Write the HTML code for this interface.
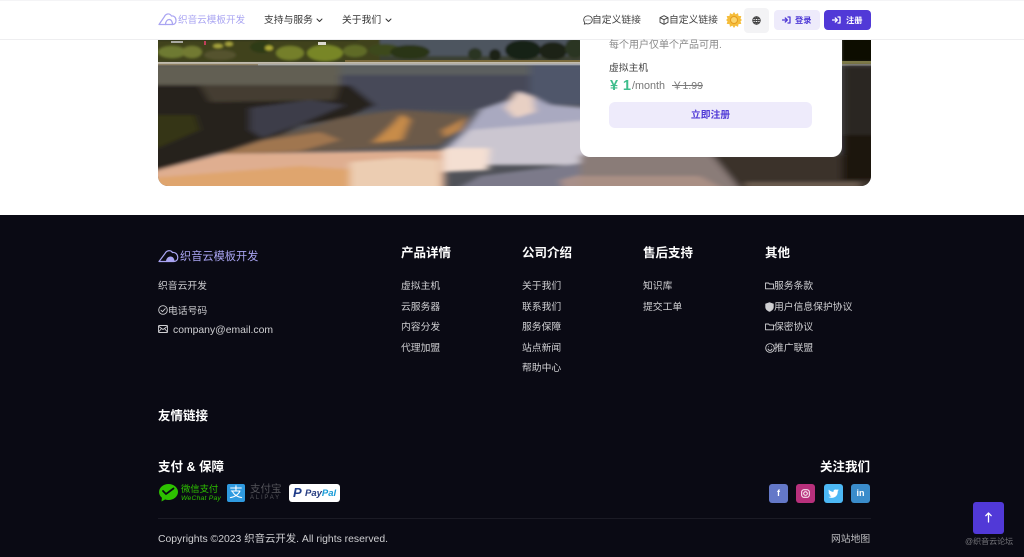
<!DOCTYPE html>
<html lang="zh"><head><meta charset="utf-8"><title>织音云模板开发</title>
<style>
html,body{margin:0;padding:0;background:#fff}
body{width:1024px;height:557px;overflow:hidden;position:relative;font-family:"Liberation Sans","Noto Sans CJK SC",sans-serif;font-size:9.8px;color:#333}
.a{position:absolute;white-space:nowrap;line-height:14px}
svg.i{position:absolute;fill:none;stroke:currentColor;stroke-width:1.4;stroke-linecap:round;stroke-linejoin:round}
#foot{position:absolute;left:0;top:215px;width:1024px;height:342px;background:#0a0a14}
.f{color:#cfcfd2}
.h{color:#fff;font-weight:700;font-size:12.5px;line-height:16px}
.soc{position:absolute;top:484px;width:19px;height:19px;border-radius:3px;color:#fff;text-align:center;font:700 9px/19px "Liberation Sans",sans-serif}
</style></head><body>

<svg class="a" style="left:0;top:0" width="1024" height="215" viewBox="0 0 1024 215">
<defs>
<clipPath id="c"><path d="M158 40H871V176a10 10 0 0 1-10 10H168a10 10 0 0 1-10-10Z"/></clipPath>
<filter id="b1" x="-5%" y="-20%" width="110%" height="140%"><feGaussianBlur stdDeviation="1.300"/></filter>
<filter id="b3" x="-5%" y="-10%" width="110%" height="120%"><feGaussianBlur stdDeviation="4 1.500"/></filter>
</defs>
<g clip-path="url(#c)">
<rect x="158" y="40" width="713" height="146" fill="#4f5158"/>
<g filter="url(#b1)">
<rect x="150" y="36" width="290" height="27" fill="#40431f"/>
<rect x="380" y="36" width="210" height="21" fill="#4e545e"/>
<rect x="380" y="56" width="210" height="6" fill="#3a3f30"/>
<ellipse cx="172" cy="52" rx="14" ry="6" fill="#6e7a30"/>
<ellipse cx="192" cy="52" rx="10" ry="6" fill="#727a32"/>
<ellipse cx="220" cy="55" rx="16" ry="5" fill="#54522e"/>
<ellipse cx="218" cy="46" rx="5" ry="2" fill="#a9a63c"/>
<ellipse cx="229" cy="44" rx="4" ry="2" fill="#a9a63c"/>
<ellipse cx="262" cy="47" rx="12" ry="6" fill="#2e3a18"/>
<ellipse cx="269" cy="48" rx="4" ry="2.500" fill="#b0ac38"/>
<ellipse cx="290" cy="53" rx="14" ry="7" fill="#747f2a"/>
<ellipse cx="325" cy="53" rx="18" ry="8" fill="#788628"/>
<ellipse cx="355" cy="51" rx="12" ry="6" fill="#5e6b28"/>
<ellipse cx="385" cy="50" rx="16" ry="6" fill="#3c4a1e"/>
<ellipse cx="410" cy="52" rx="20" ry="7" fill="#2c3418"/>
<ellipse cx="475" cy="54" rx="7" ry="6" fill="#2c3524"/>
<ellipse cx="495" cy="55" rx="6" ry="6" fill="#1c2418"/>
<ellipse cx="523" cy="50" rx="18" ry="10" fill="#192016"/>
<ellipse cx="553" cy="51" rx="14" ry="9" fill="#1c2418"/>
<ellipse cx="575" cy="48" rx="10" ry="10" fill="#2a3422"/>
<rect x="158" y="36" width="200" height="4" fill="#1e2418"/>
<rect x="842" y="36" width="32" height="26" fill="#0e0b06"/>
</g>
<rect x="171" y="41" width="12" height="2" fill="#a8a8a0"/><rect x="204" y="41" width="2" height="4" fill="#c0405a"/><rect x="318" y="42" width="8" height="3" fill="#dddad0"/>
<rect x="345" y="60" width="235" height="2" fill="#7a6a3c"/>
<rect x="158" y="62" width="422" height="2" fill="#c9c2b3"/>
<rect x="158" y="64" width="100" height="1.500" fill="#a8946e"/>
<rect x="258" y="64" width="322" height="1.500" fill="#d8d8d8"/>
<rect x="842" y="61" width="29" height="3" fill="#7d7a48"/>
<rect x="842" y="64" width="29" height="2" fill="#8a8a84"/>
<g filter="url(#b3)">
<rect x="150" y="65" width="200" height="24" fill="#625f52"/>
<rect x="340" y="65" width="190" height="14" fill="#5c5e5e"/>
<rect x="340" y="75" width="190" height="35" fill="#474a58"/>
<rect x="530" y="65" width="60" height="40" fill="#50566a"/>
<path d="M150 85H350L375 105 345 118 300 125 262 145 220 152 158 170 150 170Z" fill="#26241f"/>
<path d="M200 85H340L335 100 210 102Z" fill="#453d32"/>
<path d="M150 115H195L200 130 158 148H150Z" fill="#363618"/>
<path d="M250 108 310 100 345 105 300 124 262 138 250 130Z" fill="#3c3e48"/>
<path d="M215 155 260 140 300 130 340 118 400 110 470 115 458 128 440 145 300 152Z" fill="#6c5a48"/>
<path d="M222 154 262 141 320 132 340 140 300 151Z" fill="#a07650"/>
<path d="M372 143 392 125 402 114 410 120 402 140Z" fill="#c88c48"/>
<path d="M442 130 468 117 462 130 445 138Z" fill="#bb844c"/>
<path d="M443 150 465 130 480 110 510 100 518 91 532 96 550 105 590 108V160H443Z" fill="#a9a9c0"/>
<path d="M505 108 517 92 533 97 535 112 515 118Z" fill="#e8d0c4"/>
<path d="M450 150 470 130 590 120V165H450Z" fill="#cbc6d0"/>
<path d="M150 172 220 154 445 150V195H150Z" fill="#dfae90"/>
<path d="M150 178 300 166 360 170 370 195H150Z" fill="#dfa56e"/>
<path d="M350 162 400 158 440 160 440 195H350Z" fill="#eccdb2"/>
<path d="M443 148 490 148 488 170 443 172Z" fill="#f4dfd2"/>
<path d="M445 195 480 176 590 162V195Z" fill="#7c7a8a"/>
<path d="M560 180 590 172V195H565Z" fill="#a8908a"/>
<path d="M580 155 712 155 745 195H580Z" fill="#8a7b78"/>
<path d="M580 176 700 176 735 195H580Z" fill="#a98f84"/>
<path d="M712 155H880V195H745Z" fill="#3a3229"/>
<rect x="745" y="182" width="115" height="6" fill="#6a5c50"/>
<rect x="842" y="66" width="40" height="75" fill="#2a2722"/>
<rect x="842" y="135" width="40" height="45" fill="#1a1610"/>
</g>
</g>
<rect x="580" y="30" width="262" height="127" rx="10" fill="#fff"/>
</svg>

<div class="a" style="left:0;top:0;width:1024px;height:40px;background:#fff;border-bottom:1px solid #eeeef0;box-sizing:border-box;border-top:1px solid #f4f4f6"></div>

<svg class="i" style="left:158px;top:12px;color:#a9a4f2;stroke-width:1.200" width="19" height="14" viewBox="0 0 19 14"><path d="M1 12.500 6.500 4.500C7.500 2 11.500 .5 13.500 4 16 3.500 18 5.500 18 8.500 18 11 16.500 12.500 14.500 12.500Z"/><path d="M7.500 12.500c0-3 1.800-5 3.700-5s3.300 2 3.300 5"/></svg>
<div class="a" style="left:178px;top:14px;color:#a9a4f2;font-size:9.600px">织音云模板开发</div>
<div class="a" style="left:264px;top:14px;color:#333">支持与服务</div>
<svg class="i" style="left:316px;top:18px;color:#333;stroke-width:1" width="7" height="5" viewBox="0 0 7 5"><path d="M1 1 3.500 3.500 6 1"/></svg>
<div class="a" style="left:342px;top:14px;color:#333">关于我们</div>
<svg class="i" style="left:385px;top:18px;color:#333;stroke-width:1" width="7" height="5" viewBox="0 0 7 5"><path d="M1 1 3.500 3.500 6 1"/></svg>

<svg class="i" style="left:583px;top:15px;color:#444;stroke-width:.9" width="10" height="10" viewBox="0 0 10 10"><path d="M5 .8C2.500.8.700 2.600.700 4.800c0 1 .4 1.900 1 2.600L1.300 9.200l2-.6c.5.2 1.100.3 1.700.3 2.500 0 4.300-1.800 4.300-4.100S7.500.8 5 .8Z"/><path d="M3 5h.1M5 5h.1M7 5h.1"/></svg>
<div class="a" style="left:592px;top:14px;color:#444">自定义链接</div>
<svg class="i" style="left:659px;top:15px;color:#444;stroke-width:.9" width="10" height="10" viewBox="0 0 10 10"><path d="M5 .7 9 2.700V7.300L5 9.300 1 7.300V2.700ZM1 2.700 5 4.700 9 2.700M5 4.700V9.300"/></svg>
<div class="a" style="left:669px;top:14px;color:#444">自定义链接</div>

<svg class="i" style="left:726px;top:12px;stroke:none" width="16" height="16" viewBox="0 0 16 16"><path fill="#f5bd3a" d="M8 0l1.600 2.400L12 1.100l.5 2.800 2.800.2-.8 2.700L16 8l-1.500 1.200.8 2.700-2.800.2-.5 2.800-2.400-1.300L8 16l-1.600-2.400L4 14.900l-.5-2.800-2.800-.2.800-2.700L0 8l1.500-1.200-.8-2.700 2.800-.2L4 1.100l2.400 1.300Z"/><circle cx="8" cy="8" r="3.500" fill="#fbd56c" stroke="#e59b1f" stroke-width="1"/></svg>
<div class="a" style="left:744px;top:8px;width:25px;height:25px;background:#f3f3f5;border-radius:4px"></div>
<svg class="i" style="left:752px;top:16px;color:#444;stroke-width:1" width="9" height="9" viewBox="0 0 9 9"><circle cx="4.500" cy="4.500" r="3.700"/><path d="M.8 4.500h7.400M1.500 2.500h6M1.500 6.500h6M4.500.8c-2 2.200-2 5.200 0 7.400M4.500.8c2 2.200 2 5.200 0 7.400"/></svg>

<div class="a" style="left:774px;top:10px;width:46px;height:20px;background:#eeebfb;border-radius:4px"></div>
<svg class="i" style="left:782px;top:16px;color:#4f39d6;stroke-width:1.300" width="9" height="8" viewBox="0 0 9 8"><path d="M.5 4h4.500M3.300 2 5.300 4 3.300 6M6 1h2v6H6" /></svg>
<div class="a" style="left:795px;top:14px;color:#4f39d6;font-size:8.200px;font-weight:700">登录</div>
<div class="a" style="left:824px;top:10px;width:47px;height:20px;background:#5139d7;border-radius:4px"></div>
<svg class="i" style="left:832px;top:16px;color:#fff;stroke-width:1.300" width="9" height="8" viewBox="0 0 9 8"><path d="M.5 4h4.500M3.300 2 5.300 4 3.300 6M6 1h2v6H6"/></svg>
<div class="a" style="left:846px;top:14px;color:#fff;font-size:8.200px;font-weight:700">注册</div>

<div class="a" style="left:609px;top:39px;color:#888;font-size:10px">每个用户仅单个产品可用.</div>
<div class="a" style="left:609px;top:62px;color:#444">虚拟主机</div>
<div class="a" style="left:610px;top:78px;color:#3ebd8c;font-size:14.500px;font-weight:700;line-height:16px;letter-spacing:.4px">¥ 1</div>
<div class="a" style="left:632px;top:79px;color:#777;font-size:10.800px">/month</div>
<div class="a" style="left:672px;top:79px;color:#777;font-size:10.500px;text-decoration:line-through">￥1.99</div>
<div class="a" style="left:609px;top:102px;width:203px;height:26px;background:#eeebfb;border-radius:6px;text-align:center;line-height:27px;color:#4f39d6;font-weight:700;">立即注册</div>

<div id="foot"></div>
<svg class="i" style="left:158px;top:249px;color:#a9a4f2;stroke-width:1.200" width="21" height="14" viewBox="0 0 21 14"><path d="M1 12.500 7 4.500C8.500 1.500 12.500 .5 14.500 3.500 17.500 3 19.800 5.500 19.800 8.500 19.800 11 18 12.500 16 12.500Z"/><path fill="#a9a4f2" stroke="none" d="M8 12.500c0-3 2.200-5 4.500-5s4 2 4 5Z"/></svg>
<div class="a" style="left:180px;top:250px;color:#a9a4f2;font-size:11.200px">织音云模板开发</div>
<div class="a f" style="left:158px;top:280px">织音云开发</div>
<svg class="i" style="left:158px;top:305px;color:#cfcfd2;stroke-width:.9" width="10" height="10" viewBox="0 0 10 10"><circle cx="5" cy="5" r="4.300"/><path d="M3 5.200 4.500 6.700 7.200 3.700"/></svg>
<div class="a f" style="left:168px;top:305px">电话号码</div>
<svg class="i" style="left:158px;top:325px;color:#cfcfd2;stroke-width:.9" width="10" height="8" viewBox="0 0 10 8"><rect x=".5" y=".5" width="9" height="7" rx=".8"/><path d="M.5 1.200 5 4.500 9.500 1.200M.5 7 3.500 3.500M9.500 7 6.500 3.500"/></svg>
<div class="a f" style="left:173px;top:324px;font-size:10.400px">company@email.com</div>

<div class="a h" style="left:401px;top:245px">产品详情</div>
<div class="a f" style="left:401px;top:280px">虚拟主机</div>
<div class="a f" style="left:401px;top:301px">云服务器</div>
<div class="a f" style="left:401px;top:321px">内容分发</div>
<div class="a f" style="left:401px;top:342px">代理加盟</div>

<div class="a h" style="left:522px;top:245px">公司介绍</div>
<div class="a f" style="left:522px;top:280px">关于我们</div>
<div class="a f" style="left:522px;top:301px">联系我们</div>
<div class="a f" style="left:522px;top:321px">服务保障</div>
<div class="a f" style="left:522px;top:342px">站点新闻</div>
<div class="a f" style="left:522px;top:362px">帮助中心</div>

<div class="a h" style="left:643px;top:245px">售后支持</div>
<div class="a f" style="left:643px;top:280px">知识库</div>
<div class="a f" style="left:643px;top:301px">提交工单</div>

<div class="a h" style="left:765px;top:245px">其他</div>
<svg class="i" style="left:765px;top:282px;color:#cfcfd2;stroke-width:.9" width="9" height="8" viewBox="0 0 9 8"><path d="M.5 6.800V1h3l1 1h4v4.800Z"/></svg>
<div class="a f" style="left:774px;top:280px">服务条款</div>
<svg class="i" style="left:765px;top:302px;stroke:none" width="9" height="10" viewBox="0 0 9 10"><path fill="#cfcfd2" d="M4.500.3 8.700 1.800V5c0 2.300-2 4-4.200 4.800C2.300 9 .3 7.300.3 5V1.800Z"/></svg>
<div class="a f" style="left:774px;top:301px">用户信息保护协议</div>
<svg class="i" style="left:765px;top:323px;color:#cfcfd2;stroke-width:.9" width="9" height="8" viewBox="0 0 9 8"><path d="M.5 6.800V1h3l1 1h4v4.800Z"/></svg>
<div class="a f" style="left:774px;top:321px">保密协议</div>
<svg class="i" style="left:765px;top:343px;color:#cfcfd2;stroke-width:.9" width="10" height="10" viewBox="0 0 10 10"><circle cx="5" cy="5" r="4.300"/><path d="M3 6c.5 1 1.200 1.400 2 1.400S6.500 7 7 6M3.500 3.800h.1M6.500 3.800h.1"/></svg>
<div class="a f" style="left:774px;top:342px">推广联盟</div>

<div class="a h" style="left:158px;top:408px">友情链接</div>
<div class="a h" style="left:158px;top:459px">支付 &amp; 保障</div>
<div class="a h" style="left:820px;top:459px">关注我们</div>

<svg class="i" style="left:158px;top:483px;stroke:none" width="20" height="19" viewBox="0 0 20 19"><ellipse cx="10.500" cy="9" rx="9.500" ry="8" fill="#2dc100"/><path fill="#2dc100" d="M4 14 3.500 18.500 8 16Z"/><path fill="none" stroke="#0a0a14" stroke-width="1.800" stroke-linecap="round" stroke-linejoin="round" d="M5 8 8 11 15.500 5.500"/></svg>
<div class="a" style="left:181px;top:484px;color:#2dc100;font-size:9.300px;line-height:11px">微信支付</div>
<div class="a" style="left:181px;top:495px;color:#2dc100;font-size:6.800px;font-style:italic;line-height:8px;letter-spacing:.2px">WeChat Pay</div>

<div class="a" style="left:227px;top:484px;width:18px;height:18px;background:#2f9ae0;border-radius:2px;color:#fff;font-size:13.500px;line-height:18px;text-align:center">支</div>
<div class="a" style="left:250px;top:483px;color:#54545a;font-size:10.500px;line-height:12px;">支付宝</div>
<div class="a" style="left:250px;top:495px;color:#54545a;font-size:6px;line-height:7px;letter-spacing:1.800px">ALIPAY</div>

<div class="a" style="left:289px;top:484px;width:51px;height:18px;background:#fff;border-radius:3px"></div>
<div class="a" style="left:293px;top:485px;color:#1f3c88;font:italic 700 13px/16px 'Liberation Sans',sans-serif">P</div>
<div class="a" style="left:305px;top:486px;font:italic 700 9.500px/15px 'Liberation Sans',sans-serif;color:#253b80">Pay<span style="color:#179bd7">Pal</span></div>

<div class="soc" style="left:769px;background:#6478c8">f</div>
<div class="soc" style="left:796px;background:#b8307c"><svg style="position:absolute;left:5px;top:5px" width="9" height="9" viewBox="0 0 9 9" fill="none" stroke="#fff"><rect x=".7" y=".7" width="7.600" height="7.600" rx="2.200"/><circle cx="4.500" cy="4.500" r="1.800"/></svg></div>
<div class="soc" style="left:824px;background:#4cb8f5"><svg style="position:absolute;left:4px;top:5px" width="11" height="9" viewBox="0 0 11 9"><path fill="#fff" d="M10.800 1.200c-.4.200-.8.300-1.200.3.400-.3.800-.7.900-1.200-.4.200-.9.400-1.300.5C7.900.2 6.200.3 5.600 1.700c-.2.400-.2.900-.1 1.300C3.700 2.900 2 2 .9.600.3 1.600.6 2.900 1.600 3.600 1.200 3.600.900 3.500.5 3.300.5 4.400 1.300 5.300 2.300 5.500c-.3.100-.7.100-1 0 .3.900 1.100 1.500 2.100 1.500C2.500 7.700 1.300 8 .2 7.900c3.900 2.300 9.800.3 9.500-5.500.4-.3.800-.7 1.100-1.200Z"/></svg></div>
<div class="soc" style="left:851px;background:#3a8ccb">in</div>

<div class="a" style="left:158px;top:518px;width:713px;height:1px;background:#1b1b25"></div>
<div class="a f" style="left:158px;top:533px;font-size:10.400px">Copyrights ©2023 织音云开发. All rights reserved.</div>
<div class="a f" style="left:831px;top:533px;color:#bdbdc0">网站地图</div>

<div class="a" style="left:973px;top:502px;width:31px;height:32px;background:#5139d7;border-radius:3px"></div>
<svg class="i" style="left:984px;top:512px;color:#fff;stroke-width:1.300" width="9" height="11" viewBox="0 0 9 11"><path d="M4.500 10V1M1.800 3.700 4.500 1 7.200 3.700"/></svg>
<div class="a" style="left:965px;top:535px;color:#77777c;font-size:8px">@织音云论坛</div>
</body></html>
